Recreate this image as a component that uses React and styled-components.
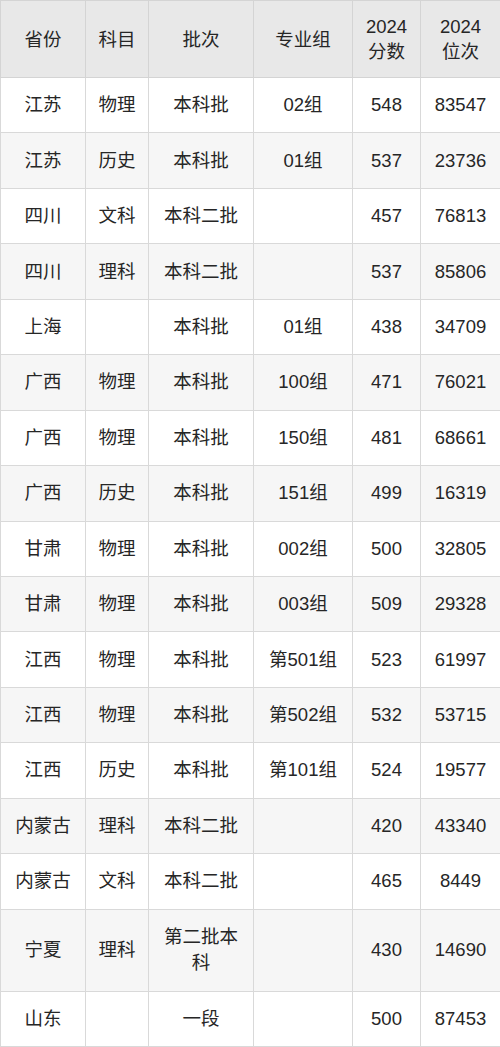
import styled, { createGlobalStyle } from "styled-components";

const GlobalStyle = createGlobalStyle`
  html, body {
    margin: 0;
    padding: 0;
    background: #ffffff;
  }
`;

const columns = [
  { key: "province", title: ["省份"], width: 85 },
  { key: "subject", title: ["科目"], width: 63 },
  { key: "batch", title: ["批次"], width: 105 },
  { key: "group", title: ["专业组"], width: 99 },
  { key: "score", title: ["2024", "分数"], width: 68 },
  { key: "rank", title: ["2024", "位次"], width: 80 },
];

const rows = [
  ["江苏", "物理", "本科批", "02组", "548", "83547"],
  ["江苏", "历史", "本科批", "01组", "537", "23736"],
  ["四川", "文科", "本科二批", "", "457", "76813"],
  ["四川", "理科", "本科二批", "", "537", "85806"],
  ["上海", "", "本科批", "01组", "438", "34709"],
  ["广西", "物理", "本科批", "100组", "471", "76021"],
  ["广西", "物理", "本科批", "150组", "481", "68661"],
  ["广西", "历史", "本科批", "151组", "499", "16319"],
  ["甘肃", "物理", "本科批", "002组", "500", "32805"],
  ["甘肃", "物理", "本科批", "003组", "509", "29328"],
  ["江西", "物理", "本科批", "第501组", "523", "61997"],
  ["江西", "物理", "本科批", "第502组", "532", "53715"],
  ["江西", "历史", "本科批", "第101组", "524", "19577"],
  ["内蒙古", "理科", "本科二批", "", "420", "43340"],
  ["内蒙古", "文科", "本科二批", "", "465", "8449"],
  ["宁夏", "理科", "第二批本科", "", "430", "14690"],
  ["山东", "", "一段", "", "500", "87453"],
];

const Table = styled.table`
  width: 500px;
  table-layout: fixed;
  border-collapse: collapse;
  font-family: "Liberation Sans", "Noto Sans CJK SC", sans-serif;
  font-size: 18.5px;
  color: #262626;
`;

const HeadCell = styled.th`
  height: 76px;
  padding: 0 8px;
  background: #e8e8e8;
  border: 1px solid #d4d4d4;
  font-weight: normal;
  line-height: 25px;
  text-align: center;
  vertical-align: middle;
`;

const Row = styled.tr`
  background: ${(p) => (p.$striped ? "#f6f6f6" : "#ffffff")};
`;

const Cell = styled.td`
  height: ${(p) => (p.$tall ? "81px" : "54.45px")};
  padding: 0 10px;
  border: 1px solid #d9d9d9;
  line-height: 26px;
  text-align: center;
  vertical-align: middle;
`;

export default function App() {
  return (
    <>
      <GlobalStyle />
      <Table>
        <colgroup>
          {columns.map((c) => (
            <col key={c.key} style={{ width: c.width }} />
          ))}
        </colgroup>
        <thead>
          <tr>
            {columns.map((c) => (
              <HeadCell key={c.key}>
                {c.title.map((t, i) => (
                  <div key={i}>{t}</div>
                ))}
              </HeadCell>
            ))}
          </tr>
        </thead>
        <tbody>
          {rows.map((r, i) => (
            <Row key={i} $striped={i % 2 === 1}>
              {r.map((v, j) => (
                <Cell key={j} $tall={r[2].length > 4}>
                  {v}
                </Cell>
              ))}
            </Row>
          ))}
        </tbody>
      </Table>
    </>
  );
}
